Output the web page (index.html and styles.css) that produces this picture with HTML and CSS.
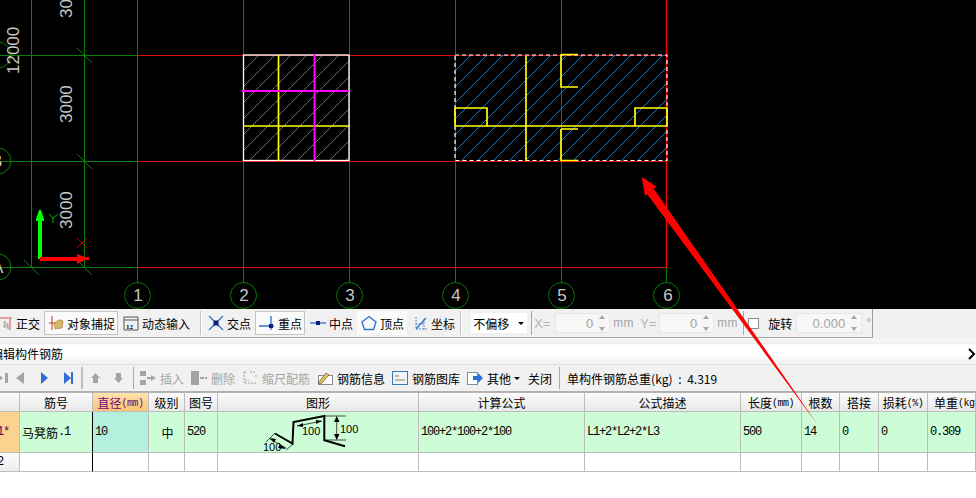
FILE: index.html
```html
<!DOCTYPE html>
<html lang="zh">
<head>
<meta charset="utf-8">
<title>编辑构件钢筋</title>
<link rel="stylesheet" href="styles.css">
</head>
<body>
<div class="page">
  <svg class="canvas" width="976" height="309" viewBox="0 0 976 309">
    <defs>
      <pattern id="hatchWhite" width="16" height="16" patternUnits="userSpaceOnUse" patternTransform="translate(243 55)">
        <path d="M-1 17 17 -1" class="hatch-white"/>
      </pattern>
      <pattern id="hatchBlue" width="16" height="16" patternUnits="userSpaceOnUse" patternTransform="translate(455 55)">
        <path d="M-1 17 17 -1" class="hatch-blue"/>
      </pattern>
    </defs>
    <g class="axis">
      <path d="M31.5 0V267.5M84.5 0V267.5M0 55.5H137M0 161.5H137M0 267.5H137"/>
      <path d="M137.5 267V283M243.5 267V283M349.5 267V283M455.5 267V283M561.5 267V283M666.5 267V283"/>
      <path d="M137.5 308V309M243.5 308V309M349.5 308V309M455.5 308V309M561.5 308V309M666.5 308V309"/>
      <path d="M77 48 92 63M77 154 92 169M77 260 92 275M24 260 39 275"/>
      <circle cx="-2" cy="55" r="13"/><circle cx="-2" cy="161" r="13"/><circle cx="-2" cy="267" r="13"/>
      <circle cx="137.500" cy="295.500" r="13"/><circle cx="243.500" cy="295.500" r="13"/><circle cx="349.500" cy="295.500" r="13"/>
      <circle cx="455.500" cy="295.500" r="13"/><circle cx="561.500" cy="295.500" r="13"/><circle cx="666.500" cy="295.500" r="13"/>
    </g>
    <path class="grid-red" d="M137.500 0V267.500M243.500 0V267.500M349.500 0V267.500M455.500 0V267.500M561.500 0V267.500M137 55.500H666M137 161.500H666M137 267.500H666"/>
    <path class="grid-bright" d="M666.500 0V267.500"/>

    <rect x="243" y="55" width="106" height="106" fill="url(#hatchWhite)"/>
    <rect class="box-white" x="243.500" y="55" width="105.500" height="105.500"/>
    <path class="bar-yellow" d="M278.500 55V161M243 126H349"/>
    <path class="bar-magenta" d="M314.500 54V161M242 91H349"/>

    <rect x="455" y="55" width="212" height="106" fill="url(#hatchBlue)"/>
    <rect class="box-dash" x="455" y="55" width="212" height="105.500"/>
    <path class="bar-yellow" d="M526 56V161M455 126H666M455 126V108H487V126M667 126V108H635V126M561 54.500H578M561 54.500V87H578M561 129H578M561 129V160.500H578"/>

    <g class="dim">
      <text transform="translate(19 74) rotate(-90)">12000</text>
      <text transform="translate(72 18) rotate(-90)">3000</text>
      <text transform="translate(72 123) rotate(-90)">3000</text>
      <text transform="translate(72 229) rotate(-90)">3000</text>
      <text x="-9" y="167">B</text>
      <text x="-8" y="273">A</text>
      <text class="mid" x="138" y="301">1</text>
      <text class="mid" x="244" y="301">2</text>
      <text class="mid" x="350" y="301">3</text>
      <text class="mid" x="456" y="301">4</text>
      <text class="mid" x="562" y="301">5</text>
      <text class="mid" x="668" y="301">6</text>
    </g>

    <path class="ucs-green" d="M38 259V221H36V219L39 210H41L44 219V221H42V259Z"/>
    <path class="ucs-red" d="M40 257H77V254L85 257H89V260H85L77 264V261H40Z"/>
    <path class="ucs-y" d="M49 214 53 218 58 214M53 218V223"/>
    <path class="ucs-x" d="M77 238 87 248M87 238 77 248"/>
  </svg>

  <div class="bar bar-snap">
    <div class="snap-inner">
      <div class="tool tool-first">
        <svg class="ico" viewBox="0 0 16 16"><path d="M2 3H15M13 3V15" class="i-pink"/><path d="M7 6 7 13 9 11 11 14 12 13 10 10 12 10Z" class="i-gray"/></svg>
        <span>正交</span>
      </div>
      <div class="tool pressed">
        <svg class="ico" viewBox="0 0 16 16"><path d="M1 8H15M4 1V15" class="i-red"/><path d="M6 9C8 5 13 4 15 6L14 13 7 14Z" class="i-tan"/></svg>
        <span>对象捕捉</span>
      </div>
      <div class="tool">
        <svg class="ico" viewBox="0 0 16 16"><path d="M1 2H15M1 5H15M1 2V15H15V2" class="i-dark"/><text x="3" y="14" class="i-num">12</text></svg>
        <span>动态输入</span>
      </div>
      <i class="sep sep-a"></i>
      <div class="tool">
        <svg class="ico" viewBox="0 0 16 16"><path d="M1 1 15 15M15 1 1 15" class="i-blue"/><rect x="5.500" y="5.500" width="5" height="5" class="i-navy"/></svg>
        <span>交点</span>
      </div>
      <div class="tool pressed">
        <svg class="ico" viewBox="0 0 16 16"><path d="M0 11H15M12 1V15" class="i-blue"/><rect x="10" y="9" width="4" height="4" class="i-navy"/></svg>
        <span>重点</span>
      </div>
      <div class="tool">
        <svg class="ico" viewBox="0 0 16 16"><path d="M0 8H16" class="i-blue"/><rect x="6" y="6" width="4" height="4" class="i-navy"/></svg>
        <span>中点</span>
      </div>
      <div class="tool pressed-light">
        <svg class="ico" viewBox="0 0 16 16"><path d="M8 1.500 15 7 12.500 14.500H3.500L1 7Z" class="i-blue"/></svg>
        <span>顶点</span>
      </div>
      <div class="tool">
        <svg class="ico" viewBox="0 0 16 16"><path d="M4 2V14H16M4 9 12 9M12 4V14" class="i-dots"/><path d="M4 14 14 3" class="i-blue"/></svg>
        <span>坐标</span>
      </div>
      <i class="sep sep-b"></i>
      <div class="select"><span>不偏移</span><i class="caret"></i></div>
      <i class="vline vline-a"></i>
      <span class="off lab-x">X=</span>
      <div class="spin"><span class="off">0</span><i class="arrows"></i></div>
      <span class="off unit">mm</span>
      <span class="off lab-y">Y=</span>
      <div class="spin"><span class="off">0</span><i class="arrows"></i></div>
      <span class="off unit">mm</span>
      <i class="vline vline-b"></i>
      <i class="check"></i>
      <span class="lab-rot">旋转</span>
      <div class="spin spin-wide"><span class="off">0.000</span><i class="arrows"></i></div>
      <span class="off deg">°</span>
    </div>
  </div>

  <div class="title">
    <span class="title-text">编辑构件钢筋</span>
    <svg class="close-x" width="8" height="12" viewBox="0 0 8 12"><path d="M1 1 6 6 1 11"/></svg>
  </div>

  <div class="bar bar-edit">
    <svg class="nav" viewBox="0 0 24 16"><path d="M24 3V13H21V3ZM19 8 12 3V13Z" class="f-gray"/></svg>
    <svg class="nav" viewBox="0 0 24 16"><path d="M16 2V14L8 8Z" class="f-gray"/></svg>
    <svg class="nav" viewBox="0 0 24 16"><path d="M9 2V14L16 8Z" class="f-blue"/></svg>
    <svg class="nav" viewBox="0 0 24 16"><path d="M8 2V14L15 8ZM15 2H17V14H15Z" class="f-blue"/></svg>
    <i class="vline vline-c"></i>
    <svg class="move move-up" viewBox="0 0 23 16"><path d="M11.500 3 16 8H14V13H9V8H7Z" class="f-gray"/></svg>
    <svg class="move" viewBox="0 0 23 16"><path d="M11.500 13 16 8H14V3H9V8H7Z" class="f-gray"/></svg>
    <i class="vline vline-d"></i>
    <div class="act off">
      <svg class="ico" viewBox="0 0 16 16"><path d="M0 1H6V6H0ZM0 10H6V15H0ZM7 7H11V5L16 8 11 11V9H7Z" class="f-gray"/></svg>
      <span>插入</span>
    </div>
    <div class="act off">
      <svg class="ico" viewBox="0 0 16 16"><path d="M0 1H8V15H0ZM9 7H13V9H9ZM14 7H16V9H14Z" class="f-gray"/></svg>
      <span>删除</span>
    </div>
    <div class="act off">
      <svg class="ico" viewBox="0 0 16 16"><path d="M2 2H5M8 2H14M2 2V14M14 5V7M4 14V8M7 14V10M10 14V11M13 14V12" class="i-grayline"/></svg>
      <span>缩尺配筋</span>
    </div>
    <div class="act">
      <svg class="ico" viewBox="0 0 16 16"><rect x="1.500" y="5.500" width="14" height="9" class="i-sheet"/><path d="M1 13 9 3 12 5 4 14Z" class="i-pencil"/></svg>
      <span>钢筋信息</span>
    </div>
    <div class="act">
      <svg class="ico" viewBox="0 0 16 16"><rect x="0.500" y="1.500" width="15" height="13" class="i-window"/><path d="M3 6H7M3 10H13" class="i-lines"/></svg>
      <span>钢筋图库</span>
    </div>
    <div class="act">
      <svg class="ico" viewBox="0 0 16 16"><rect x="0.500" y="2.500" width="10" height="12" class="i-doc"/><path d="M6 6H11V3L16 8 11 13V10H6Z" class="f-blue"/></svg>
      <span>其他</span>
      <i class="caret caret-other"></i>
    </div>
    <span class="act-close">关闭</span>
    <i class="vline vline-e"></i>
    <span class="total">单构件钢筋总重(kg) : 4.319</span>
  </div>

  <div class="sheet">
    <div class="hd hd-row"></div>
    <div class="hd">筋号</div>
    <div class="hd hd-active">直径<small>(mm)</small></div>
    <div class="hd">级别</div>
    <div class="hd">图号</div>
    <div class="hd">图形</div>
    <div class="hd">计算公式</div>
    <div class="hd">公式描述</div>
    <div class="hd">长度<small>(mm)</small></div>
    <div class="hd">根数</div>
    <div class="hd">搭接</div>
    <div class="hd">损耗<small>(%)</small></div>
    <div class="hd hd-clip">单重<small>(kg)</small></div>

    <div class="rowhead rowhead-on">1*</div>
    <div class="cell on cur-left"><span class="zh">马凳筋</span><span class="dot">.</span>1</div>
    <div class="cell on cur">10</div>
    <div class="cell on center"><span class="zh">中</span></div>
    <div class="cell on">520</div>
    <div class="cell on shape">
      <svg class="shape-svg" width="200" height="41" viewBox="0 0 200 41">
        <path class="rebar" d="M57 21.500 74.500 31.500 75.500 10 106.300 4V28.300L127 34.300"/>
        <path class="thin" d="M107 4H128M107 28H128M118.700 5V27M57 21 48 30M75 32 68 38"/>
        <path class="thin" d="M52 27 68 36M79 14 104 9"/>
        <path class="solid" d="M118.700 4 116 10H121.500ZM118.700 28 116 22H121.500ZM52 26 58 27 56 31ZM68 37 62 32 60 36ZM79 14 85 11 85 15ZM104 9 98 8 98 12Z"/>
        <text x="45" y="39">100</text>
        <text x="84" y="23">100</text>
        <text x="122" y="21">100</text>
      </svg>
    </div>
    <div class="cell on">100+2*100+2*100</div>
    <div class="cell on">L1+2*L2+2*L3</div>
    <div class="cell on">500</div>
    <div class="cell on">14</div>
    <div class="cell on">0</div>
    <div class="cell on">0</div>
    <div class="cell on">0.309</div>

    <div class="rowhead rowhead-2">2</div>
    <div class="cell cur-left"></div>
    <div class="cell"></div>
    <div class="cell"></div>
    <div class="cell"></div>
    <div class="cell"></div>
    <div class="cell"></div>
    <div class="cell"></div>
    <div class="cell"></div>
    <div class="cell"></div>
    <div class="cell"></div>
    <div class="cell"></div>
    <div class="cell"></div>
  </div>

  <svg class="pointer" width="976" height="498" viewBox="0 0 976 498">
    <path d="M641.700 177 657 187 653.500 188.500 817.700 424.700 647 194 645 196Z"/>
  </svg>
</div>
</body>
</html>
```

FILE: styles.css
```css
* { box-sizing: border-box; }
html, body { margin: 0; padding: 0; background: #fff; }
body { font: 12px "Noto Sans CJK SC", "Liberation Sans", sans-serif; color: #000; }
.page { position: relative; width: 976px; height: 498px; overflow: hidden; background: #fff; }
.canvas { display: block; background: #000; }

/* drawing */
.axis path, .axis circle { fill: none; stroke: #0a7d0a; stroke-width: 1; }
.grid-red { fill: none; stroke: #e01010; stroke-width: 1; }
.grid-bright { fill: none; stroke: #ff0000; stroke-width: 1.4; }
.hatch-white { stroke: #b8b8b8; stroke-width: .8; stroke-dasharray: 2 .6; }
.hatch-blue { stroke: #2a8ae6; stroke-width: .9; }
.box-white { fill: none; stroke: #fff; stroke-width: 1.3; }
.box-dash { fill: none; stroke: #fff; stroke-width: 1.2; stroke-dasharray: 4 3; }
.bar-yellow { fill: none; stroke: #ffff00; stroke-width: 1.7; }
.bar-magenta { fill: none; stroke: #ff00ff; stroke-width: 2; }
.dim text { font: 17px "Liberation Sans", sans-serif; fill: #c8c8c8; }
.dim .mid { text-anchor: middle; }
.ucs-green { fill: #00ff00; }
.ucs-red { fill: #ff0000; }
.ucs-y { fill: none; stroke: #00e000; stroke-width: .8; }
.ucs-x { fill: none; stroke: #e00000; stroke-width: .8; }

/* toolbars */
.bar { display: flex; align-items: center; background: #f1f1f1; }
.bar-snap { height: 29px; }
.snap-inner { display: flex; align-items: center; gap: 1px; width: 873px; height: 29px; border-right: 1px solid #9c9c9c; border-bottom: 1px solid #a8a8a8; }
.tool { display: flex; flex: none; align-items: center; gap: 3px; height: 24px; padding: 0 3px 0 4px; white-space: nowrap; }
.tool-first { margin-left: -7px; }
.pressed { background: #fafafa; border: 1px solid #c4c4c4; padding: 0 2px 0 3px; }
.pressed-light { background: #fbfbfb; }
.ico { display: block; flex: none; width: 16px; height: 16px; }
.sep { flex: none; height: 24px; border-left: 1px solid #c2c2c2; border-right: 1px solid #fff; width: 2px; }
.sep-a { margin-left: 6px; margin-right: 1px; }
.sep-b { margin-left: 1px; }
.vline { flex: none; width: 1px; background: #a8a8a8; height: 24px; }
.vline-a { margin-left: 3px; }
.vline-b { margin-left: 3px; }
.vline-c { margin-left: 1px; width: 2px; height: 22px; background: #bdbdbd; }
.vline-d { margin-left: 3px; height: 22px; background: #a8a8a8; }
.vline-e { margin-left: 7px; height: 22px; }
.select { display: flex; flex: none; align-items: center; justify-content: space-between; width: 56px; height: 20px; margin-left: 8px; padding: 0 3px 0 2px; background: #fff; }
.caret { display: block; flex: none; width: 0; height: 0; border: 3px solid transparent; border-top: 3px solid #000; border-bottom: 0; }
.off { color: #a6a6a6; }
.lab-x { flex: none; width: 20px; margin-left: 1px; font: 13px "Liberation Sans", sans-serif; color: #b4b4b4; }
.lab-y { flex: none; width: 18px; margin-left: 4px; font: 13px "Liberation Sans", sans-serif; color: #b4b4b4; }
.unit { flex: none; width: 22px; margin-left: 2px; font: 12px "Liberation Sans", sans-serif; letter-spacing: .5px; }
.spin { position: relative; display: flex; flex: none; align-items: center; justify-content: flex-end; width: 55px; height: 20px; padding-right: 16px; background: #f7f7f7; border: 1px solid #e6e6e6; font: 13px "Liberation Sans", sans-serif; }
.spin-wide { width: 66px; margin-left: 3px; }
.arrows { position: absolute; right: 3px; top: 2px; width: 7px; height: 14px; }
.arrows::before, .arrows::after { content: ""; position: absolute; left: 0; border: 3px solid transparent; }
.arrows::before { top: -1px; border-bottom: 4px solid #a4a4a4; border-top: 0; }
.arrows::after { bottom: -1px; border-top: 4px solid #a4a4a4; border-bottom: 0; }
.check { flex: none; width: 11px; height: 11px; margin-left: 3px; background: #fff; border: 1px solid #8c8c8c; }
.lab-rot { flex: none; margin-left: 8px; width: 24px; white-space: nowrap; }
.deg { flex: none; margin-left: 3px; font: 12px "Liberation Sans", sans-serif; }

.title { display: flex; align-items: center; justify-content: space-between; height: 26px; padding: 6px 0 0; background: linear-gradient(#f4f4f4 0, #f4f4f4 5px, #e6e6e6 5px, #fff 7px, #fff 16px, #f0f0f0 26px); overflow: hidden; }
.title-text { margin-left: -9px; line-height: 20px; }
.close-x { display: block; }
.close-x path { fill: none; stroke: #000; stroke-width: 2; }

.bar-edit { height: 28px; border-top: 1px solid #e2e2e2; border-bottom: 1px solid #b0b0b0; }
.nav { display: block; flex: none; width: 24px; height: 16px; }
.nav:first-child { margin-left: -16px; }
.move { display: block; flex: none; width: 23px; height: 16px; }
.move-up { margin-left: 1px; }
.act { display: flex; flex: none; align-items: center; gap: 4px; margin-left: 7px; white-space: nowrap; }
.vline-d + .act { margin-left: 6px; }
.caret-other { margin-left: -1px; }
.act-close { flex: none; margin-left: 8px; }
.total { margin-left: 7px; white-space: nowrap; word-spacing: 3px; }

.f-gray { fill: #a4a4a4; }
.f-blue { fill: #2f6fd8; }
.i-pink, .i-red, .i-dark, .i-blue, .i-dots, .i-grayline { fill: none; stroke-width: 1; }
.i-pink { stroke: #e0a0a0; stroke-width: 2; }
.i-gray { fill: #c8c8c8; stroke: #888; stroke-width: .5; }
.i-red { stroke: #c83030; }
.i-tan { fill: #d8b868; stroke: #8a6a20; stroke-width: .5; }
.i-dark { stroke: #555; }
.i-num { font: bold 7px "Liberation Serif", serif; fill: #000; }
.i-blue { stroke: #2f6fc8; stroke-width: 1.3; }
.i-navy { fill: #10207a; }
.i-dots { stroke: #2f6fc8; stroke-dasharray: 1.500 1.500; }
.i-grayline { stroke: #a4a4a4; stroke-dasharray: 2 1; }
.i-sheet { fill: #fff; stroke: #889; }
.i-pencil { fill: #e8c050; stroke: #444; stroke-width: .6; }
.i-window { fill: #eef4fc; stroke: #3f78b8; }
.i-lines { stroke: #a08040; fill: none; }
.i-doc { fill: #fff; stroke: #7890a8; }

/* sheet */
.sheet { display: grid; grid-template-columns: 20px 73px 56px 36px 33px 201px 166px 156px 61px 38px 39px 49px 48px; grid-template-rows: 19px 41px 19px; border-top: 1px solid #b4b4b4; }
.hd { display: flex; align-items: center; justify-content: center; background: linear-gradient(#fbfbfb, #e9e9e9); border-right: 1px solid #bdbdbd; border-bottom: 1px solid #bdbdbd; white-space: nowrap; overflow: hidden; }
.hd small { padding-top: 2px; font: 10px "Liberation Mono", monospace; letter-spacing: -.5px; }
.hd-active { background: linear-gradient(#fde3ae, #f8c575); color: #7a007a; }
.hd-clip { justify-content: flex-start; padding-left: 6px; }
.rowhead { display: flex; align-items: center; justify-content: flex-end; background: linear-gradient(#fdfdfd, #ececec); border-right: 1px solid #bdbdbd; border-bottom: 1px solid #bdbdbd; font: 12px "Liberation Mono", monospace; letter-spacing: -1.2px; }
.rowhead-2 { padding-right: 16px; }
.rowhead-on { background: #fbd28e; color: #600060; padding-right: 10px; }
.cell { display: flex; align-items: center; padding-left: 2px; background: #fff; border-right: 1px solid #bdbdbd; border-bottom: 1px solid #bdbdbd; font: 12px "Liberation Mono", monospace; letter-spacing: -1.2px; white-space: nowrap; }
.cell.on { background: #ccfdd6; }
.cell.cur { background: #b4f0dd; }
.cur-left { border-right: 1px solid #000; }
.center { justify-content: center; }
.zh { font: 12px "Noto Sans CJK SC", sans-serif; letter-spacing: 0; }
.dot { width: 6px; letter-spacing: 0; }
.shape { padding: 0; }
.shape-svg { display: block; }
.rebar { fill: none; stroke: #000; stroke-width: 2; }
.thin { fill: none; stroke: #000; stroke-width: .7; }
.solid { fill: #000; }
.shape-svg text { font: 11px "Liberation Sans", sans-serif; letter-spacing: 0; fill: #000; }

.pointer { position: absolute; left: 0; top: 0; pointer-events: none; }
.pointer path { fill: #ff0000; }
```
